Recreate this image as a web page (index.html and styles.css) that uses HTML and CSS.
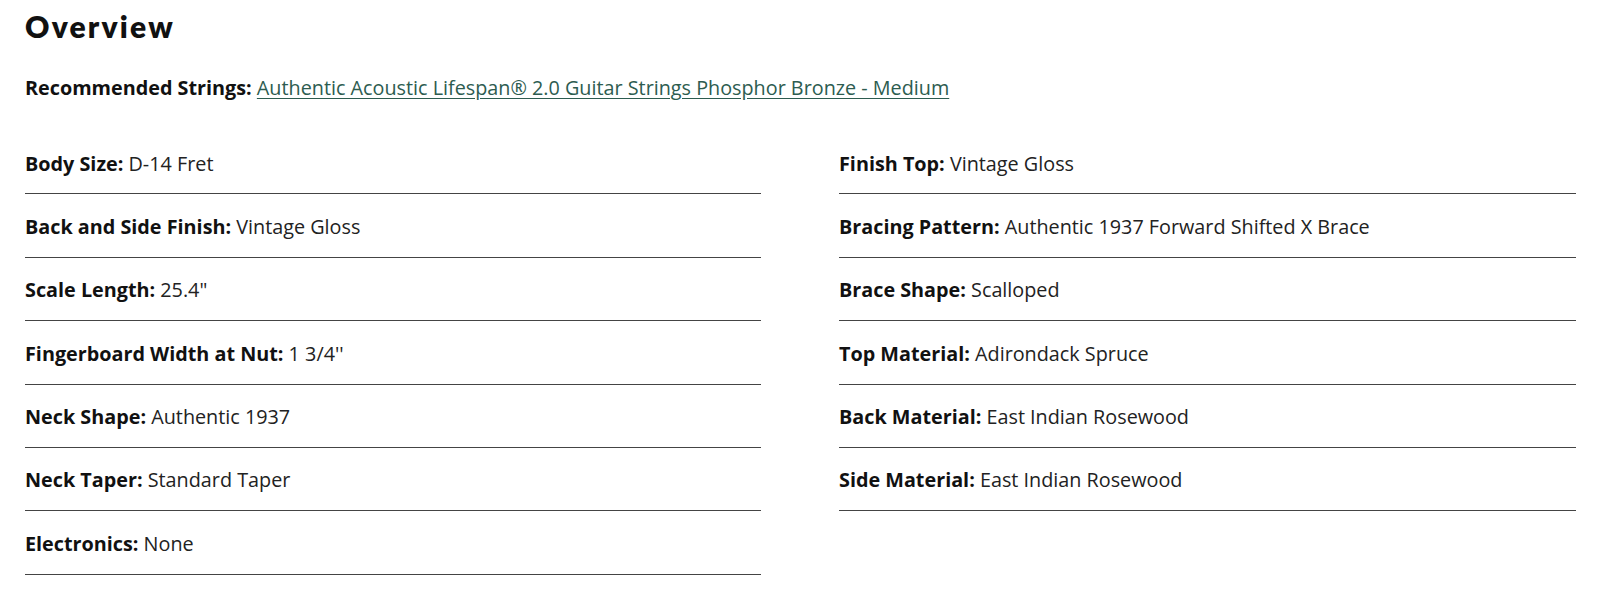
FILE: index.html
```html
<!DOCTYPE html>
<html>
<head>
<meta charset="utf-8">
<link rel="stylesheet" href="styles.css">
</head>
<body>
<section class="overview">
  <h2 class="title">Overview</h2>
  <p class="strings"><strong>Recommended Strings:</strong> <a href="#">Authentic Acoustic Lifespan® 2.0 Guitar Strings Phosphor Bronze - Medium</a></p>
  <div class="specs">
    <ul class="col">
      <li class="row"><strong>Body Size:</strong> D-14 Fret</li>
      <li class="row"><strong>Back and Side Finish:</strong> Vintage Gloss</li>
      <li class="row"><strong>Scale Length:</strong> 25.4"</li>
      <li class="row"><strong>Fingerboard Width at Nut:</strong> 1 3/4''</li>
      <li class="row"><strong>Neck Shape:</strong> Authentic 1937</li>
      <li class="row"><strong>Neck Taper:</strong> Standard Taper</li>
      <li class="row"><strong>Electronics:</strong> None</li>
    </ul>
    <ul class="col">
      <li class="row"><strong>Finish Top:</strong> Vintage Gloss</li>
      <li class="row"><strong>Bracing Pattern:</strong> Authentic 1937 Forward Shifted X Brace</li>
      <li class="row"><strong>Brace Shape:</strong> Scalloped</li>
      <li class="row"><strong>Top Material:</strong> Adirondack Spruce</li>
      <li class="row"><strong>Back Material:</strong> East Indian Rosewood</li>
      <li class="row"><strong>Side Material:</strong> East Indian Rosewood</li>
    </ul>
  </div>
</section>
</body>
</html>
```
FILE: styles.css
```css
html, body {
  margin: 0;
  padding: 0;
  background: #fff;
}
body {
  font-family: "Open Sans", "Liberation Sans", sans-serif;
  color: #222;
}
.overview {
  padding: 0 24px 0 25px;
}
.title {
  margin: 0;
  padding-top: 9px;
  font-family: "Lato", "Inter", sans-serif;
  font-weight: 800;
  font-size: 30px;
  line-height: 34px;
  letter-spacing: 2.2px;
  color: #111;
}
.strings {
  margin: 30px 0 0;
  font-size: 19.8px;
  line-height: 30px;
}
.strings strong, .row strong {
  font-weight: 700;
  color: #111;
}
.strings a {
  color: #2d5c50;
  text-decoration: underline;
  text-underline-offset: 3px;
}
.specs {
  display: grid;
  grid-template-columns: 736px 737px;
  column-gap: 78px;
  margin-top: 28px;
}
.col {
  list-style: none;
  margin: 0;
  padding: 0;
}
.row {
  font-size: 19.8px;
  line-height: 30px;
  padding: 17.5px 0 14.9px;
  border-bottom: 1px solid #444;
}
```
